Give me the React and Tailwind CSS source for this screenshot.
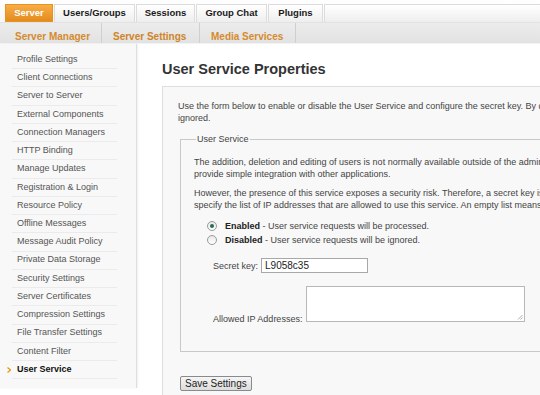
import React from "react";

const sideItems = [
  "Profile Settings",
  "Client Connections",
  "Server to Server",
  "External Components",
  "Connection Managers",
  "HTTP Binding",
  "Manage Updates",
  "Registration & Login",
  "Resource Policy",
  "Offline Messages",
  "Message Audit Policy",
  "Private Data Storage",
  "Security Settings",
  "Server Certificates",
  "Compression Settings",
  "File Transfer Settings",
  "Content Filter",
];

function Tab({ children, w, active }) {
  if (active) {
    return (
      <div
        className={`${w} h-[18px] flex items-center justify-center text-[9.5px] font-bold text-white bg-gradient-to-b from-[#f8ad45] to-[#e38c1c] border border-[#e6931f]`}
      >
        {children}
      </div>
    );
  }
  return (
    <div
      className={`${w} h-[18px] flex items-center justify-center text-[9.5px] font-bold text-[#1a1a1a] bg-gradient-to-b from-[#ffffff] to-[#eeeeee] border border-[#dcdcdc] border-b-0`}
    >
      {children}
    </div>
  );
}

function Radio({ checked }) {
  return (
    <span className="w-[10px] h-[10px] rounded-full border border-[#9a9a9a] bg-gradient-to-b from-[#e8e8e8] to-[#ffffff] flex items-center justify-center shrink-0">
      {checked && <span className="w-[4px] h-[4px] rounded-full bg-[#2a6a5a]" />}
    </span>
  );
}

export default function App() {
  return (
    <div
      className="w-[540px] h-[395px] overflow-hidden bg-white text-[#444]"
      style={{ fontFamily: '"Liberation Sans", Arial, sans-serif' }}
    >
      {/* Top tabs */}
      <div className="h-[23px] flex items-end pl-[5px] gap-[1px] bg-gradient-to-b from-[#ffffff] to-[#f7f7f7] border-b border-[#e2e2e2]">
        <Tab w="w-[48px]" active>Server</Tab>
        <Tab w="w-[81px]">Users/Groups</Tab>
        <Tab w="w-[59px]">Sessions</Tab>
        <Tab w="w-[71px]">Group Chat</Tab>
        <Tab w="w-[55px]">Plugins</Tab>
        <div className="flex-1 h-[18px] bg-gradient-to-b from-[#ffffff] to-[#eeeeee] border border-[#dcdcdc] border-b-0 border-r-0" />
      </div>

      {/* Sub nav */}
      <div className="h-[21px] flex items-stretch bg-gradient-to-b from-[#ececec] to-[#e2e2e2] border-b border-[#f4f4f4] text-[10px] font-bold text-[#d58b2e]">
        <div className="w-[102px] pl-[15px] pt-[6px] flex items-center border-r border-[#cfcfcf]">
          Server Manager
        </div>
        <div className="w-[98px] pl-[11px] pt-[6px] flex items-center border-r border-[#cfcfcf] text-[#cf8427]">
          Server Settings
        </div>
        <div className="w-[96px] pl-[11px] pt-[6px] flex items-center border-r border-[#cfcfcf]">
          Media Services
        </div>
      </div>

      <div className="flex">
        {/* Sidebar */}
        <div className="w-[137px] h-[344px] shrink-0 bg-[#f8f8f8] border-r border-[#dedede] shadow-[1px_0_2px_rgba(0,0,0,0.06)] pt-[7px]">
          {sideItems.map((t) => (
            <div
              key={t}
              className="ml-[12px] w-[105px] h-[18.24px] flex items-center pl-[5px] border-b border-[#ebebeb] text-[9px] text-[#555] whitespace-nowrap"
            >
              {t}
            </div>
          ))}
          <div className="ml-[12px] w-[105px] h-[18.24px] flex items-center pl-[5px] border-b border-[#ebebeb] text-[9px] font-bold text-[#111] whitespace-nowrap relative">
            <svg className="absolute left-[-5px] top-[6px]" width="4" height="6" viewBox="0 0 4 6">
              <path d="M0.5 0.5 L3.5 3 L0.5 5.5" fill="none" stroke="#e69a1c" strokeWidth="1.3" />
            </svg>
            User Service
          </div>
        </div>

        {/* Content */}
        <div className="flex-1 pl-[25px] pt-[15px] min-w-0">
          <h1 className="text-[14.5px] font-bold text-[#333] leading-[20px] whitespace-nowrap">
            User Service Properties
          </h1>
          <div className="mt-[7px] w-[420px] h-[320px] bg-[#f8f8f8] border border-[#dedede] pt-[13px] pl-[15px] text-[9px] leading-[12px] text-[#444]">
            <p className="whitespace-nowrap">
              Use the form below to enable or disable the User Service and configure the secret key. By default, requests with no secret key will be
            </p>
            <p>ignored.</p>

            <fieldset className="mt-[9px] ml-[2px] w-[420px] h-[219px] border border-[#c8c8c8] pl-[13px] pr-0 pt-[11px]">
              <legend className="ml-[2px] px-[1px] text-[9px] text-[#444]">User Service</legend>
              <p className="whitespace-nowrap">
                The addition, deletion and editing of users is not normally available outside of the admin console. This service lets those administrative tasks
              </p>
              <p className="whitespace-nowrap">provide simple integration with other applications.</p>
              <p className="whitespace-nowrap mt-[7px]">
                However, the presence of this service exposes a security risk. Therefore, a secret key is used to authenticate requests. You can also
              </p>
              <p className="whitespace-nowrap">
                specify the list of IP addresses that are allowed to use this service. An empty list means the service can be accessed from any location.
              </p>

              <div className="mt-[9px] ml-[13px] flex flex-col gap-[2px]">
                <div className="flex items-center gap-[8px] h-[12px]">
                  <Radio checked />
                  <span className="whitespace-nowrap">
                    <b className="text-[#222]">Enabled</b> - User service requests will be processed.
                  </span>
                </div>
                <div className="flex items-center gap-[8px] h-[12px]">
                  <Radio />
                  <span className="whitespace-nowrap">
                    <b className="text-[#222]">Disabled</b> - User service requests will be ignored.
                  </span>
                </div>
              </div>

              <div className="mt-[12px] ml-[19px] flex items-center gap-[3px]">
                <span className="whitespace-nowrap">Secret key:</span>
                <div className="w-[107px] h-[15px] bg-white border border-[#a8a8a8] pl-[3px] flex items-center text-[10px] text-[#222]">
                  L9058c35
                </div>
              </div>

              <div className="mt-[13px] ml-[19px] flex items-end gap-[4px]">
                <span className="whitespace-nowrap mb-[-3px]">Allowed IP Addresses:</span>
                <div className="w-[219px] h-[36px] bg-white border border-[#b8b8b8] relative">
                  <svg className="absolute right-[1px] bottom-[1px]" width="6" height="6" viewBox="0 0 6 6">
                    <path d="M5.5 1 L1 5.5 M5.5 3.5 L3.5 5.5" stroke="#999" strokeWidth="0.8" />
                  </svg>
                </div>
              </div>
            </fieldset>

            <button className="mt-[24px] ml-[2px] h-[15px] px-[4px] text-[10px] text-[#222] bg-gradient-to-b from-[#f6f6f6] to-[#dcdcdc] border border-[#8a8a8a] rounded-[2px] flex items-center leading-none">
              Save Settings
            </button>
          </div>
        </div>
      </div>
    </div>
  );
}
